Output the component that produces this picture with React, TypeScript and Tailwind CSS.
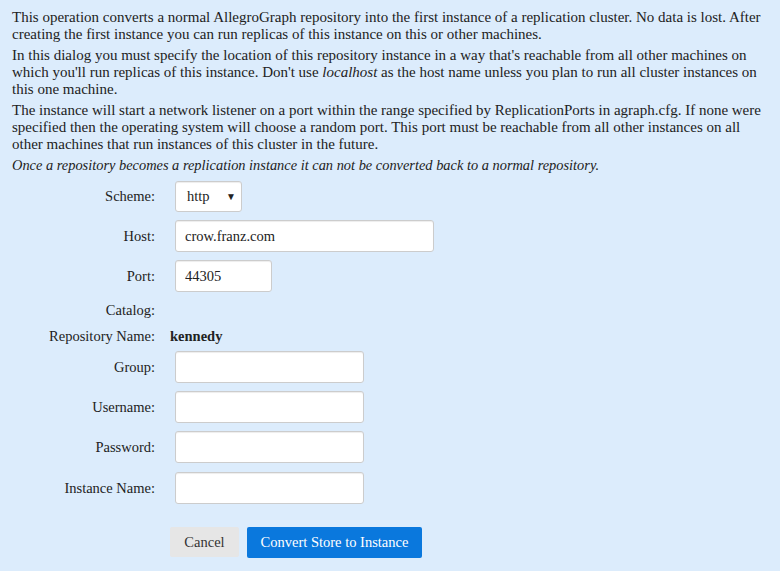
const Label = ({ children }: { children: React.ReactNode }) => (
  <div className="w-[155px] shrink-0 text-right text-[14.5px]">{children}</div>
);

const TextInput = ({ value = "", width = "w-[189px]" }: { value?: string; width?: string }) => (
  <input
    type="text"
    defaultValue={value}
    className={`${width} h-8 rounded-[3px] border border-[#cccccc] bg-white px-[9px] font-['Liberation_Serif',serif] text-[14.5px] text-[#222] shadow-[inset_0_1px_1px_rgba(0,0,0,0.075)] outline-none`}
  />
);

export default function App() {
  const fields = ["Group:", "Username:", "Password:", "Instance Name:"];
  const gaps = ["mt-[5px]", "mt-2", "mt-2", "mt-[9px]"];

  return (
    <div className="min-h-[571px] w-[780px] bg-[#dcecfc] px-3 pt-[9px] font-['Liberation_Serif','Times_New_Roman',serif] text-[15px] leading-[17px] text-[#222]">
      <p className="mb-1">
        This operation converts a normal AllegroGraph repository into the first instance of a replication cluster. No
        data is lost. After creating the first instance you can run replicas of this instance on this or other
        machines.
      </p>
      <p className="mb-1">
        In this dialog you must specify the location of this repository instance in a way that's reachable from all
        other machines on which you'll run replicas of this instance. Don't use <i>localhost</i> as the host name
        unless you plan to run all cluster instances on this one machine.
      </p>
      <p className="mb-1">
        The instance will start a network listener on a port within the range specified by ReplicationPorts in
        agraph.cfg. If none were specified then the operating system will choose a random port. This port must be
        reachable from all other instances on all other machines that run instances of this cluster in the future.
      </p>
      <p className="text-[14.4px] italic">
        Once a repository becomes a replication instance it can not be converted back to a normal repository.
      </p>

      <div className="-ml-3 mt-[7px] flex flex-col">
        <div className="flex items-center gap-5">
          <Label>Scheme:</Label>
          <div className="flex h-[31px] w-[67px] items-center justify-between rounded-[3px] border border-[#cccccc] bg-white pl-[11px] pr-[5px] text-[14.5px] shadow-[inset_0_1px_1px_rgba(0,0,0,0.075)]">
            <span>http</span>
            <span className="text-[10px]">▼</span>
          </div>
        </div>
        <div className="mt-2 flex items-center gap-5">
          <Label>Host:</Label>
          <TextInput value="crow.franz.com" width="w-[259px]" />
        </div>
        <div className="mt-2 flex items-center gap-5">
          <Label>Port:</Label>
          <TextInput value="44305" width="w-[97px]" />
        </div>
        <div className="mt-2 flex h-5 items-center gap-5">
          <Label>Catalog:</Label>
        </div>
        <div className="mt-[6px] flex h-5 items-center gap-[15px]">
          <Label>Repository Name:</Label>
          <span className="text-[14.5px] font-bold">kennedy</span>
        </div>
        {fields.map((f, i) => (
          <div key={f} className={`${gaps[i]} flex items-center gap-5`}>
            <Label>{f}</Label>
            <TextInput />
          </div>
        ))}
        <div className="ml-[170px] mt-[23px] flex gap-2">
          <button className="h-[30px] w-[69px] rounded-[2px] bg-[#e6e6e6] font-['Liberation_Serif',serif] text-[14.5px] text-[#333]">
            Cancel
          </button>
          <button className="h-[31px] w-[175px] rounded-[2px] bg-[#0a78dd] font-['Liberation_Serif',serif] text-[14.5px] text-white">
            Convert Store to Instance
          </button>
        </div>
      </div>
    </div>
  );
}
